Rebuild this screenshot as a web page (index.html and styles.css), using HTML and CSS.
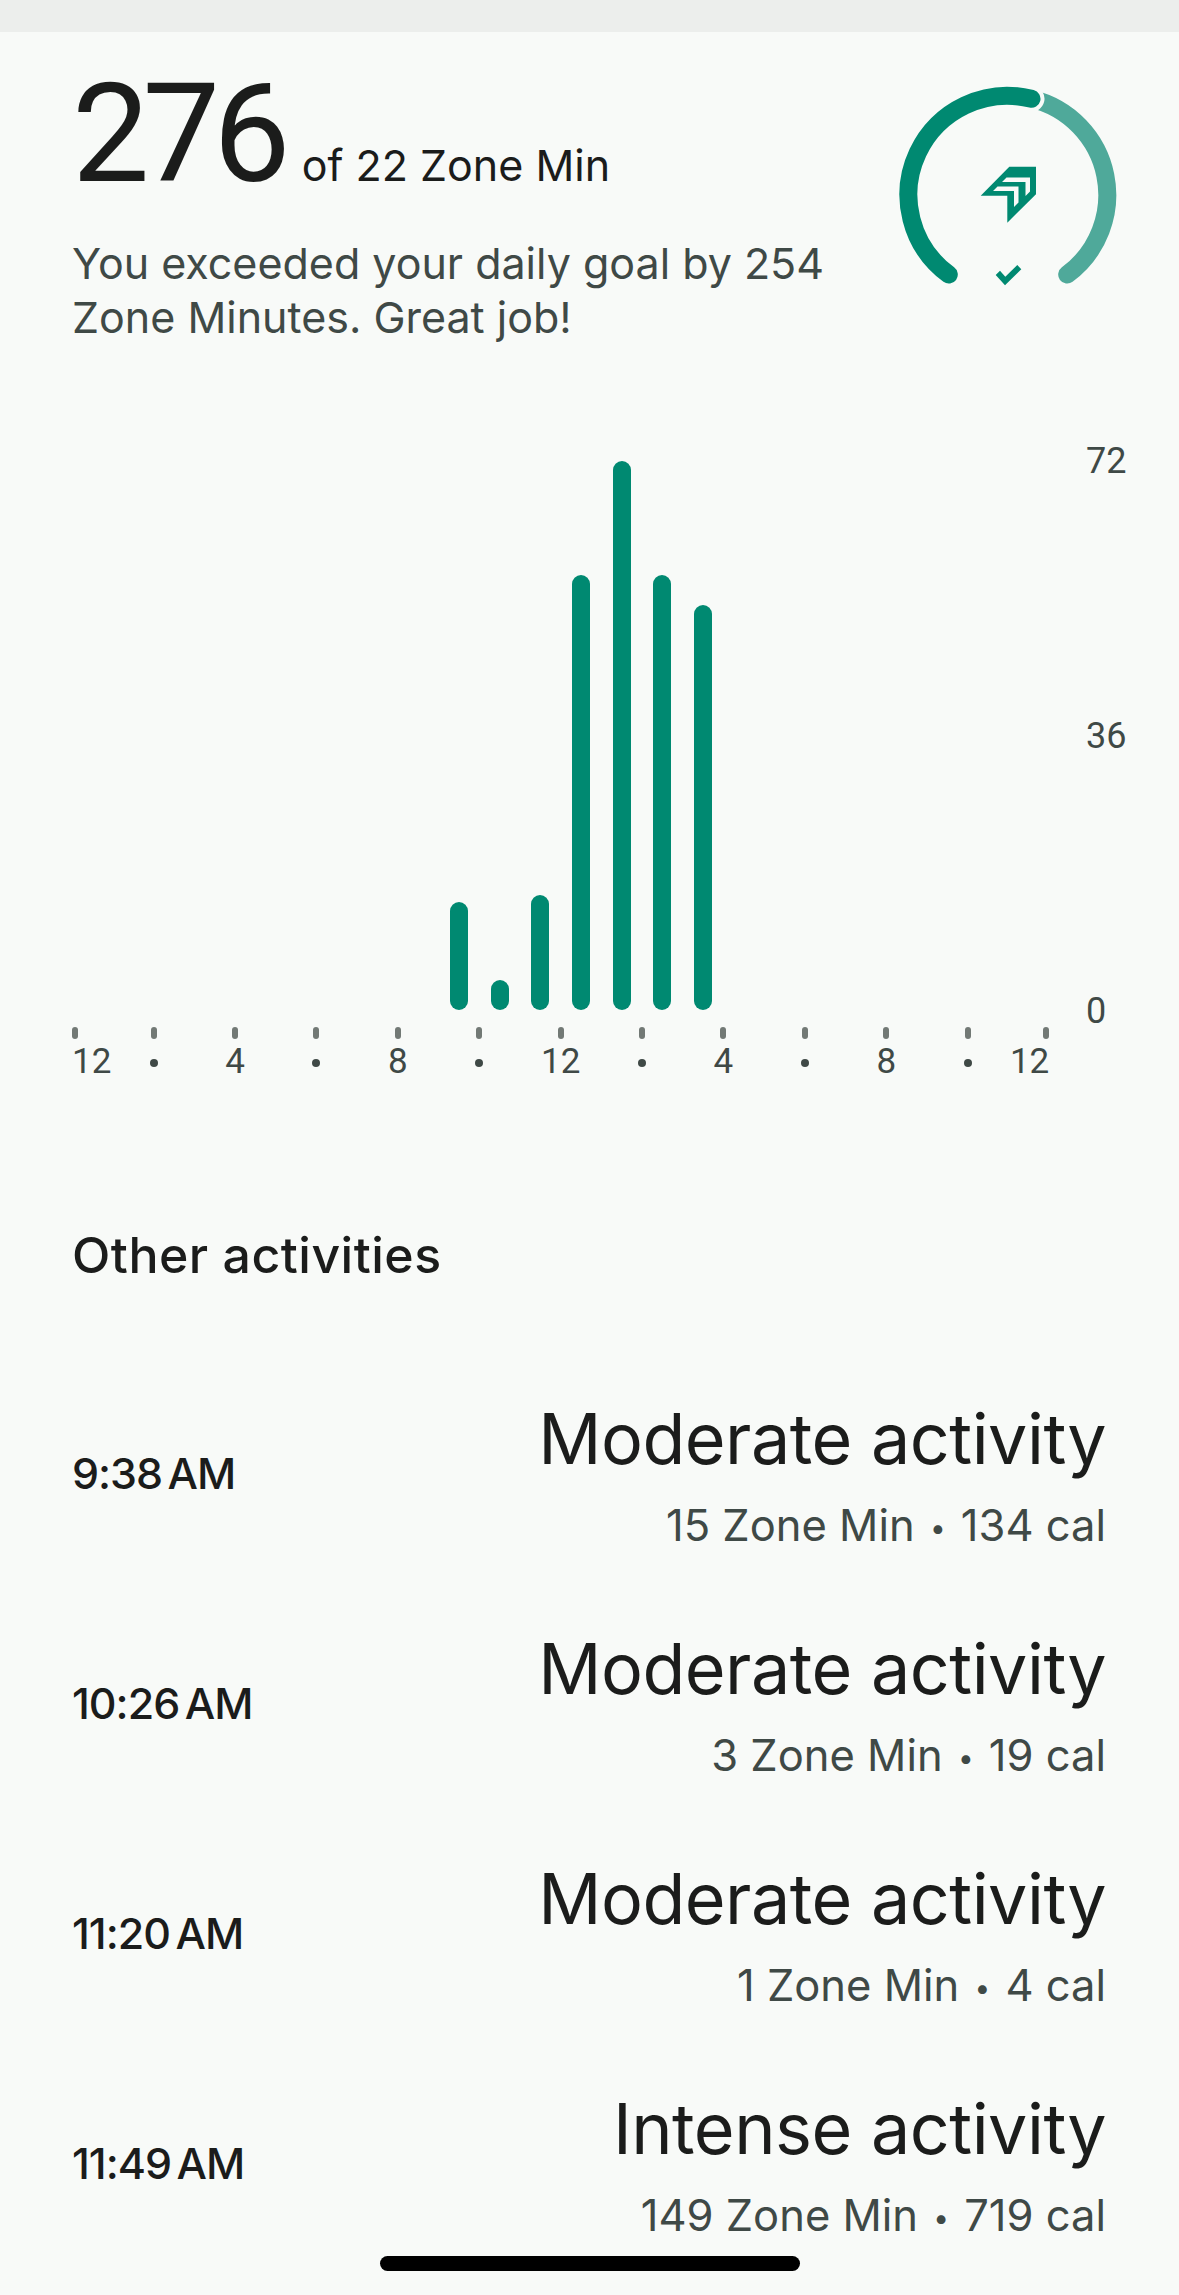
FILE: index.html
```html
<!DOCTYPE html>
<html lang="en">
<head>
  <meta charset="UTF-8" />
  <meta name="viewport" content="width=device-width, initial-scale=1.0"/>
  <title>Zone Minutes</title>
  <link rel="stylesheet" href="styles.css">
</head>
<body>

  <div class="topbar"></div>

  <div class="summary">
    <div class="summary-text">
      <div class="total"><span class="total-num">276</span><span class="total-of">of 22 Zone Min</span></div>
      <p class="goal">You exceeded your daily goal by 254 Zone Minutes. Great job!</p>
    </div>
    <svg class="ring" viewBox="0 0 220 220" width="220" height="220">
      <path class="ring-light" d="M133.5 13.8 A99 99 0 0 1 169.2 189.6"/>
      <path class="ring-halo" d="M120 11.5 A99 99 0 0 1 133.5 13.8"/>
      <path class="ring-dark" d="M50.8 189.6 A99 99 0 0 1 133.5 13.8"/>
      <path class="ring-icon" fill-rule="evenodd" d="M82.7 110.7 L111.3 81.7 L138 81.7 L138 109.3 L109.3 137.7 L109.3 110.7 Z M95 106 L99.5 101.5 L120.5 101.5 L120.5 117.5 L116 122 L116 106 Z M104 97 L108.5 92.5 L132 92.5 L132 106.5 L127.5 111 L127.5 97 Z"/>
      <path class="ring-icon" d="M97.7 190 L102 185.7 L107.3 191.7 L119.3 180 L123.3 184.3 L107 200.3 Z"/>
    </svg>
  </div>

  <div class="chart">
    <div class="bars">
      <div class="bar bar-a"></div>
      <div class="bar bar-b"></div>
      <div class="bar bar-c"></div>
      <div class="bar bar-d"></div>
      <div class="bar bar-e"></div>
      <div class="bar bar-d"></div>
      <div class="bar bar-f"></div>
    </div>
    <div class="y-labels">
      <span>72</span>
      <span>36</span>
      <span>0</span>
    </div>
  </div>

  <div class="axis">
    <div class="col col-first"><i class="tick"></i><span>12</span></div>
    <div class="col"><i class="tick"></i><b class="dot"></b></div>
    <div class="col"><i class="tick"></i><span>4</span></div>
    <div class="col"><i class="tick"></i><b class="dot"></b></div>
    <div class="col"><i class="tick"></i><span>8</span></div>
    <div class="col"><i class="tick"></i><b class="dot"></b></div>
    <div class="col"><i class="tick"></i><span>12</span></div>
    <div class="col"><i class="tick"></i><b class="dot"></b></div>
    <div class="col"><i class="tick"></i><span>4</span></div>
    <div class="col"><i class="tick"></i><b class="dot"></b></div>
    <div class="col"><i class="tick"></i><span>8</span></div>
    <div class="col"><i class="tick"></i><b class="dot"></b></div>
    <div class="col col-last"><i class="tick"></i><span>12</span></div>
  </div>

  <h2 class="section-title">Other activities</h2>

  <div class="activities">
    <div class="row">
      <div class="time">9:38 AM</div>
      <div class="info">
        <div class="name">Moderate activity</div>
        <div class="meta">15 Zone Min <span class="sep">•</span> 134 cal</div>
      </div>
    </div>
    <div class="row">
      <div class="time">10:26 AM</div>
      <div class="info">
        <div class="name">Moderate activity</div>
        <div class="meta">3 Zone Min <span class="sep">•</span> 19 cal</div>
      </div>
    </div>
    <div class="row">
      <div class="time">11:20 AM</div>
      <div class="info">
        <div class="name">Moderate activity</div>
        <div class="meta">1 Zone Min <span class="sep">•</span> 4 cal</div>
      </div>
    </div>
    <div class="row">
      <div class="time">11:49 AM</div>
      <div class="info">
        <div class="name">Intense activity</div>
        <div class="meta">149 Zone Min <span class="sep">•</span> 719 cal</div>
      </div>
    </div>
  </div>

  <div class="home-bar"></div>

</body>
</html>
```

FILE: styles.css
```css
:root { --teal: #008971; --teal-light: #4fa99a; --ink: #1b1c1b; --soft: #3f4946; --bg: #f8faf8; }
html, body { height: 100%; }
body {
  margin: 0; padding: 0;
  background: var(--bg); color: var(--ink);
  font-family: Inter, Roboto, sans-serif;
  overflow: hidden; position: relative;
}
.topbar { height: 32px; background: #eceeec; }

.summary {
  display: flex; justify-content: space-between;
  padding: 28px 61px 0 72px; height: 340px; box-sizing: border-box;
}
.summary-text { width: 790px; }
.total { display: flex; align-items: baseline; height: 124px; line-height: 124px; padding-top: 12px; }
.total-num { font-family: Roboto, sans-serif; font-size: 138px; letter-spacing: -7px; }
.total-of { font-size: 43px; margin-left: 18px; }
.goal {
  margin: 40px 0 0; font-size: 43px; line-height: 54px;
  color: var(--soft);
}
.ring { margin-top: 25px; flex: none; }
.ring path { fill: none; stroke-width: 18; stroke-linecap: round; }
.ring .ring-light { stroke: var(--teal-light); }
.ring .ring-halo { stroke: var(--bg); stroke-width: 26; }
.ring .ring-dark { stroke: var(--teal); }
.ring .ring-icon { fill: var(--teal); stroke: none; }

.chart { display: flex; height: 592px; margin-top: 68px; }
.bars {
  display: flex; align-items: flex-end; gap: 22.7px;
  width: 1086px; box-sizing: border-box;
  padding: 0 0 22px 450px;
}
.bar { width: 18px; background: var(--teal); border-radius: 9px; }
.bar-a { height: 108px; }
.bar-b { height: 30px; }
.bar-c { height: 115px; }
.bar-d { height: 435px; }
.bar-e { height: 549px; }
.bar-f { height: 405px; }
.y-labels {
  display: flex; flex-direction: column; justify-content: space-between;
  font-family: Roboto, sans-serif;
  font-size: 36px; line-height: 42px; color: var(--soft);
}

.axis {
  display: grid; grid-template-columns: 41px repeat(11, 81.4px) 41px;
  padding-left: 72px; margin-top: -5px;
  font-family: Roboto, sans-serif;
  font-size: 35px; line-height: 42px; color: var(--soft);
}
.col { display: flex; flex-direction: column; align-items: center; }
.col span { margin-top: 2px; }
.col-first { align-items: flex-start; }
.col-last { align-items: flex-end; }
.tick { width: 6px; height: 12px; border-radius: 3px; background: #727975; }
.dot { width: 8px; height: 8px; border-radius: 50%; background: var(--soft); margin-top: 20px; }

.section-title { margin: 144px 0 0 72px; font-size: 50px; line-height: 56px; font-weight: 500; letter-spacing: 0.5px; }

.activities { margin-top: 76px; }
.row {
  display: flex; justify-content: space-between; align-items: center;
  height: 230px; padding: 0 73px 0 72px;
}
.time { font-size: 43px; line-height: 50px; font-weight: 500; letter-spacing: -1px; word-spacing: -5px; margin-top: -2px; }
.info { text-align: right; padding-top: 4px; }
.name { font-size: 70px; line-height: 84px; letter-spacing: -0.5px; }
.meta { font-size: 43.5px; line-height: 56px; color: var(--soft); margin-top: 16px; }
.sep { font-size: 28px; margin: 0 3px; vertical-align: 3px; }

.home-bar {
  position: absolute; left: 380px; top: 2256px;
  width: 420px; height: 15px; border-radius: 8px; background: #000;
}
```
